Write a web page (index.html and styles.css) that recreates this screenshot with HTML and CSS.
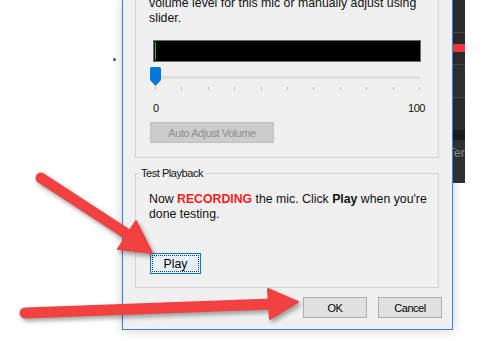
FILE: index.html
```html
<!DOCTYPE html>
<html lang="en">
<head>
    <meta charset="UTF-8">
    <meta name="viewport" content="width=device-width, initial-scale=1.0">
    <title>Microphone Settings</title>
    <link rel="stylesheet" href="styles.css">
</head>
<body>
    <!-- Desktop left of the dialog -->
    <div class="desk">
        <span class="dot"></span>
    </div>

    <!-- Mic settings dialog -->
    <div class="dialog">
        <div class="group volume">
            <p class="hint">volume level for this mic or manually adjust using slider.</p>
            <div class="meter"><span class="level"></span></div>
            <div class="slider">
                <div class="track"></div>
                <svg class="thumb" width="11" height="20" viewBox="0 0 11 20">
                    <path d="M0 1.5 Q0 0 1.5 0 H9.5 Q11 0 11 1.5 V13 L5.5 19 L0 13 Z" fill="#0078d7"/>
                </svg>
            </div>
            <div class="ticks">
                <i></i><i></i><i></i><i></i><i></i><i></i><i></i><i></i><i></i><i></i><i></i>
            </div>
            <div class="scale"><span>0</span><span>100</span></div>
            <button type="button" class="btn auto" disabled>Auto Adjust Volume</button>
        </div>

        <fieldset class="group playback">
            <legend>Test Playback</legend>
            <p class="hint">Now <span class="rec">RECORDING</span> the mic. Click <b>Play</b> when you're done testing.</p>
            <button type="button" class="btn play">Play</button>
        </fieldset>

        <div class="actions">
            <button type="button" class="btn">OK</button>
            <button type="button" class="btn">Cancel</button>
        </div>
    </div>

    <!-- Window behind the dialog -->
    <div class="behind">
        <span class="behind-label">Ter</span>
    </div>

    <!-- Annotation arrows -->
    <svg class="arrows" width="486" height="341" viewBox="0 0 486 341">
        <g fill="#f24141" stroke="#f24141" stroke-linejoin="round">
            <line x1="41" y1="178" x2="127" y2="234" stroke-width="11" stroke-linecap="round"/>
            <polygon points="118,249 136,221 152,253" stroke-width="2"/>
            <line x1="25" y1="313" x2="272" y2="304" stroke-width="11" stroke-linecap="round"/>
            <polygon points="268,289 270,319 298,302" stroke-width="2"/>
        </g>
    </svg>
</body>
</html>
```

FILE: styles.css
```css
body {
    font-family: "Liberation Sans", Arial, sans-serif;
    margin: 0;
    padding: 0;
    width: 486px;
    height: 341px;
    overflow: hidden;
    background: #fff;
    display: flex;
    position: relative;
    color: #111;
}
.desk {
    width: 122px;
    flex: none;
    box-sizing: border-box;
    padding: 58px 0 0 113px;
}
.dot {
    display: block;
    width: 3px;
    height: 3px;
    border-radius: 50%;
    background: #555;
}
.dialog {
    width: 331px;
    flex: none;
    align-self: flex-start;
    box-sizing: border-box;
    border: 1px solid #2b87dc;
    border-top: 0;
    background: #f0f0f0;
    padding: 0 13px 11px 12px;
    box-shadow: 0 0 10px rgba(0, 0, 0, 0.2);
}
.group {
    border: 1px solid #d3d3d3;
}
.hint {
    margin: 0 -8px 0 0;
    font-size: 12.3px;
    line-height: 15px;
}
.rec {
    color: #ff1c1c;
    font-weight: bold;
}
.volume {
    border-top: 0;
    padding: 0 13px 14px;
}
.volume .hint {
    margin-top: -4px;
}
.meter {
    display: flex;
    height: 22px;
    box-sizing: border-box;
    margin: 14px 4px 0;
    padding: 1px;
    border: 1px solid #6d6d6d;
    background: #000;
}
.level {
    width: 1px;
    background: #17c217;
}
.slider {
    position: relative;
    height: 20px;
    box-sizing: border-box;
    margin: 5px 0 0 1px;
    padding: 9px 5px 0;
}
.track {
    height: 3px;
    background: #e0e0e0;
}
.thumb {
    position: absolute;
    left: 0;
    top: 0;
}
.ticks {
    display: flex;
    justify-content: space-between;
    height: 3px;
    margin: 0 5px 0 6px;
}
.ticks i {
    width: 1px;
    background: #bdbdbd;
}
.scale {
    display: flex;
    justify-content: space-between;
    margin-top: 12px;
    padding-left: 4px;
    font-size: 11px;
    letter-spacing: -0.45px;
    line-height: 13px;
}
.btn {
    font-family: inherit;
    font-size: 11px;
    letter-spacing: -0.45px;
    width: 64px;
    height: 21px;
    padding: 0;
    box-sizing: border-box;
    border: 1px solid #adadad;
    background: #e1e1e1;
    color: #000;
}
.auto {
    display: block;
    width: 124px;
    margin: 7px 0 0 1px;
    background: #cccccc;
    border-color: #bfbfbf;
    color: #8f8f8f;
}
.playback {
    margin: 9px 0 0;
    padding: 12px 13px 13px;
    min-width: 0;
}
.playback legend {
    padding: 0 2px;
    margin-left: -10px;
    font-size: 11px;
    letter-spacing: -0.45px;
    line-height: 13px;
}
.play {
    display: block;
    width: 51px;
    margin: 31px 0 0 1px;
    font-size: 12.3px;
    letter-spacing: 0;
    background: #e5f1fb;
    border-color: #0078d7;
    outline: 1px dotted #333;
    outline-offset: -3px;
}
.actions {
    display: flex;
    justify-content: flex-end;
    gap: 11px;
    margin: 9px -3px 0 0;
}
.behind {
    width: 12px;
    height: 183px;
    flex: none;
    box-sizing: border-box;
    overflow: hidden;
    padding-top: 146px;
    white-space: nowrap;
    background: linear-gradient(to bottom,
        #2c2c2c 0 32px, #454545 32px 33px, #2a2a2a 33px 44px,
        #e5393b 44px 52px, #2a2a2a 52px 64px, #454545 64px 65px,
        #2e2e2e 65px 97px, #454545 97px 98px, #2c2c2c 98px 130px,
        #1b1b1b 130px 140px, #303030 140px);
}
.behind-label {
    display: block;
    margin-left: -5px;
    font-size: 12px;
    color: #8d8d8d;
}
.arrows {
    position: absolute;
    left: 0;
    top: 0;
    pointer-events: none;
    filter: drop-shadow(2px 3px 2px rgba(0, 0, 0, 0.35));
}
```
